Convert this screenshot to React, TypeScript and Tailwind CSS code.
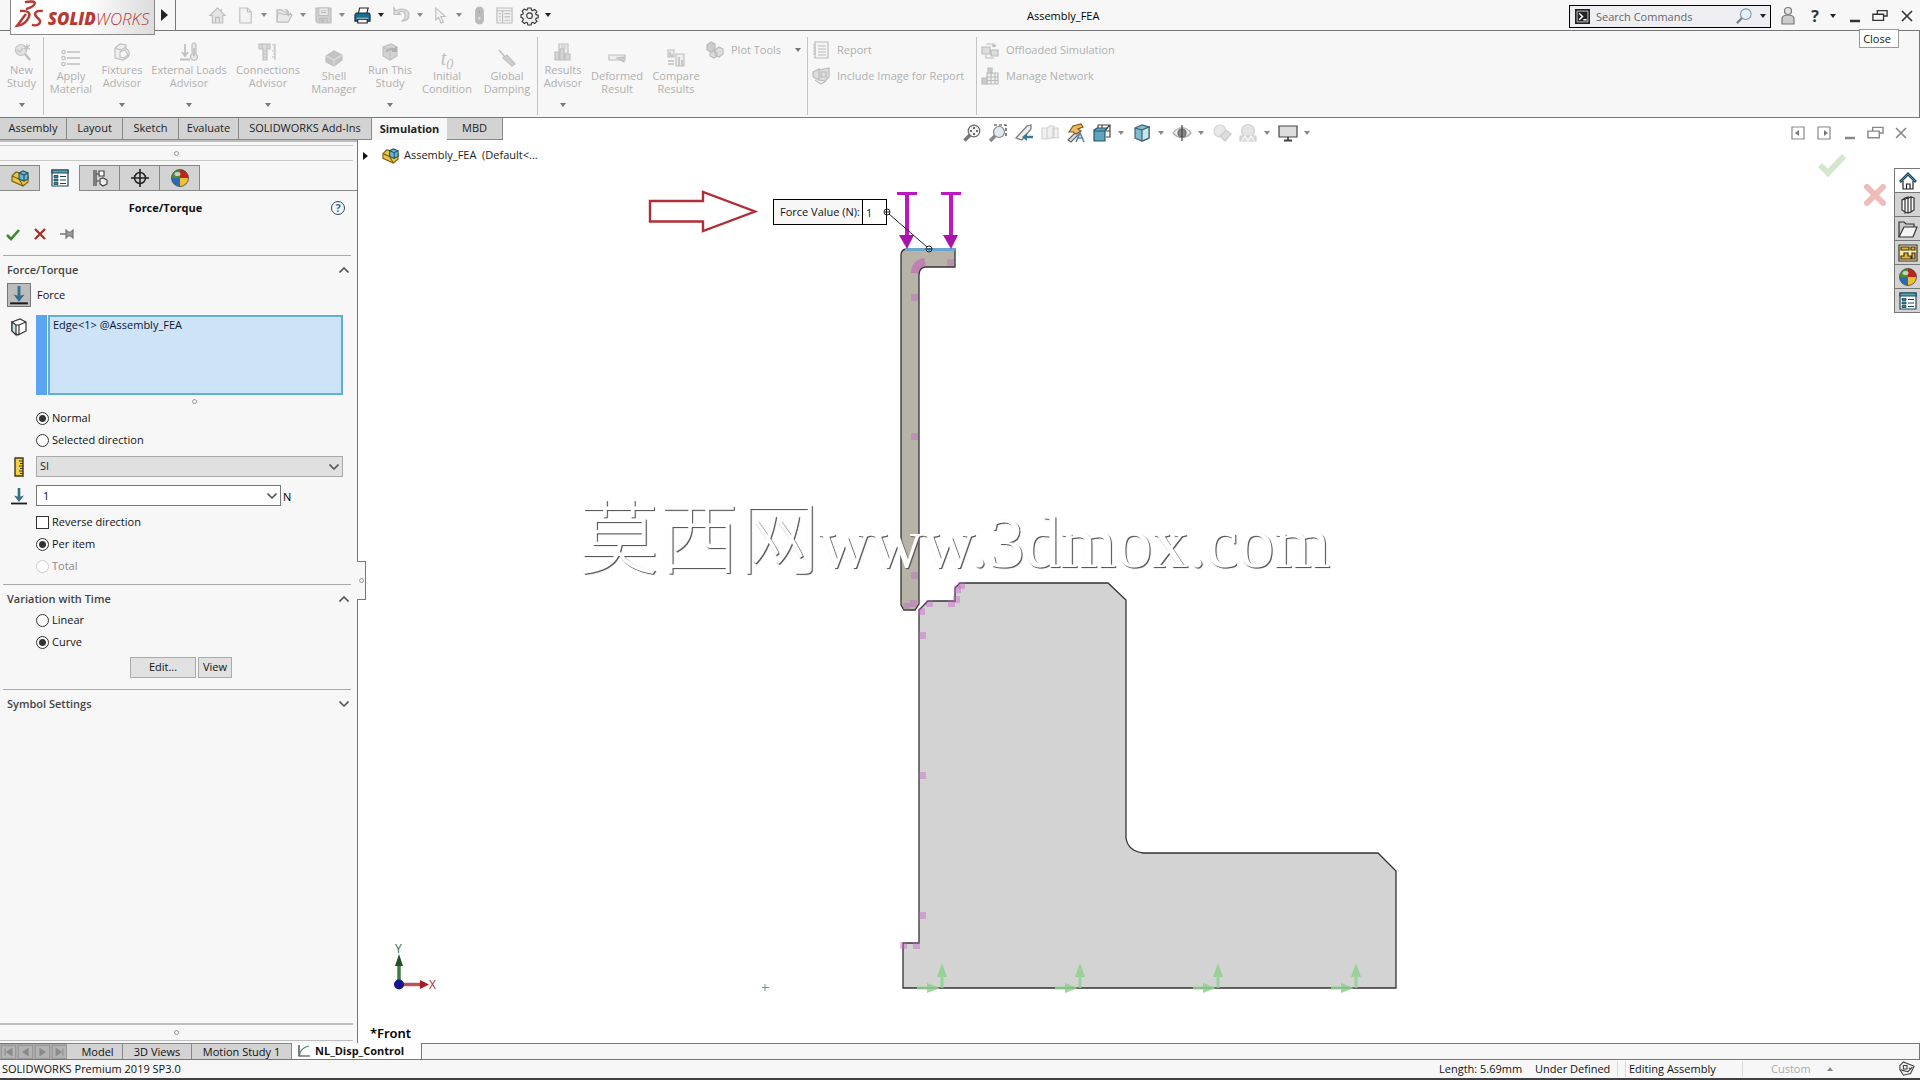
import type { ReactNode } from "react";
import { clsx } from "clsx";

type IconProps = { className?: string; children: ReactNode; box?: string };

function Icon({ className = "size-[18px]", children, box = "0 0 18 18" }: IconProps) {
  return (
    <svg
      viewBox={box}
      className={clsx("shrink-0 overflow-visible", className)}
      fill="none"
      stroke="currentColor"
      strokeWidth="1.2"
      aria-hidden="true"
    >
      {children}
    </svg>
  );
}

function Caret({ className = "text-[#555]" }: { className?: string }) {
  return (
    <svg viewBox="0 0 6 4" className={clsx("h-1 w-1.5 shrink-0", className)} aria-hidden="true">
      <path d="M0 0h6L3 4z" fill="currentColor" />
    </svg>
  );
}

function Chevron({ up }: { up?: boolean }) {
  return (
    <svg viewBox="0 0 10 6" className="h-1.5 w-2.5" fill="none" stroke="#555" strokeWidth="1.6" aria-hidden="true">
      <path d={up ? "M.5 5.5 5 1l4.5 4.5" : "M.5.5 5 5 9.500.5"} />
    </svg>
  );
}

/* ---------- icons ---------- */

const icons = {
  home: (
    <>
      <path d="M1 9 9 1l8 8h-2.500v8h-11V9z" fill="#e4e4e4" />
      <path d="M7 17v-6h4v6" />
      <path d="M13 2v3" />
    </>
  ),
  file: <path d="M3 1h8l4 4v12H3zM11 1v4h4" fill="#f3f3f3" />,
  open: (
    <>
      <path d="M1 15V3h5l2 2h5v3" fill="#e6e6e6" />
      <path d="m1 16 1-10 6 2h9l-4 8z" fill="#e9e9e9" />
      <path d="M9 3c3-1 4 1 4 5m-2-2 2 3 3-3" />
    </>
  ),
  save: (
    <>
      <path d="M1 1h16v16H3l-2-2z" fill="#cfcfcf" />
      <path d="M4 1h10v8H4z" fill="#eee" />
      <path d="M5 17v-5h8v5M6 4h6M6 6h6" />
      <path d="M7 13h2v3H7z" fill="currentColor" />
    </>
  ),
  print: (
    <>
      <path d="M4.500 7 6 1h9l-1.500 6" fill="#fff" stroke="#222" />
      <path d="M1 9c0-1.500 1-2.500 2-2.500h12c1 0 2 1 2 2.500v6H1z" fill="#1d6e94" stroke="#16323f" />
      <path d="M3 12h12" stroke="#bfe3f2" />
      <path d="M4 13h10v4H4z" fill="#f4f4f4" stroke="#222" />
    </>
  ),
  undo: <path d="M1 1v7h7L5.500 6C9 3.500 13 5 13 9c0 3-2 5-4 6 5 0 8-2.500 8-7 0-5-8-8-14-4z" fill="#dedede" />,
  cursor: <path d="M4 1v13l3-3 2.500 6 2.500-1-2.500-6H14z" fill="#f3f3f3" />,
  light: (
    <>
      <rect x="5" y="0" width="8" height="18" rx="4" fill="#b9b9b9" />
      <circle cx="9" cy="5" r="1.500" fill="#999" />
      <circle cx="9" cy="12" r="2" fill="#ddd" />
    </>
  ),
  list: (
    <>
      <path d="M1 1h16v16H1zM1 4h16M7 4v13" fill="#f0f0f0" />
      <path d="M3 7h2M3 10.500h2M3 14h2M9 7h6M9 10.500h6M9 14h6" />
    </>
  ),
  gear: (
    <>
      <path
        d="M7.300 1h3.400l.5 2.200 1.300.6 2-1.300 2.300 2.300-1.300 2 .6 1.300 2.100.5v2.800l-2.100.5-.6 1.300 1.300 2-2.300 2.300-2-1.300-1.300.6-.5 2.200H7.300l-.5-2.200-1.300-.6-2 1.300-2.300-2.300 1.300-2-.6-1.300L0 10.900V8.100l1.900-.5.6-1.300-1.300-2L3.500 2l2 1.300 1.300-.6z"
        fill="#eee"
      />
      <circle cx="9" cy="9.200" r="3" fill="#fff" />
    </>
  ),
  newStudy: (
    <>
      <circle cx="8" cy="7" r="5.500" fill="#e2e2e2" />
      <path d="m12 11 5 6" strokeWidth="2.500" />
      <path d="M14 1v6M11 3l6 3M11 6l6-4M4 7l3 2 3-4" />
    </>
  ),
  material: (
    <>
      <path d="M5 3h13M5 9h13M5 15h13" strokeWidth="1.600" />
      <circle cx="1.500" cy="3" r="1.700" />
      <circle cx="1.500" cy="9" r="1.700" />
      <circle cx="1.500" cy="15" r="1.700" />
    </>
  ),
  fixture: (
    <>
      <path d="M2 5 7 1l6 1v4c4 1 4 5 2 8l-5 3-8-2z" fill="#eee" />
      <path d="m2 5 6 2 5-3M8 7v4" />
      <path d="m7 9 5-2 3 5-4 3-4-1z" fill="#f7f7f7" />
    </>
  ),
  loads: (
    <>
      <path d="M5 1v12M2 9l3 4 3-4M0 16.500h10" strokeWidth="1.800" />
      <path d="M12 2a2 2 0 0 1 4 0v9a3.500 3.500 0 1 1-4 0z" fill="#e5e5e5" />
      <path d="M14 5v8" strokeWidth="1.800" />
    </>
  ),
  connections: (
    <>
      <path d="M0 1h11v5H8v11H4V6H0z" fill="#dcdcdc" />
      <path d="M3 1v5M8 1v5M4 8h4M4 11h4M4 14h4M16 1v16M13 2h3M14 5h2M13 8h3M14 11h2M13 14h3" />
    </>
  ),
  shell: (
    <>
      <path d="m1 7 8-5 8 4v5l-8 6-8-4z" fill="#c4c4c4" />
      <path d="m1 7 8 4 8-5M9 11v6" stroke="#ddd" />
    </>
  ),
  run: (
    <>
      <path d="m2 4 8-3 6 3v9l-7 4-7-4z" fill="#d2d2d2" />
      <path d="m2 4 7 4 7-4M9 8v9" />
      <path d="M5 9c3-4 7-4 10-1m0-4v4h-4" strokeWidth="2" stroke="#b0b0b0" />
    </>
  ),
  damping: (
    <>
      <path d="m1 1 6 7" strokeWidth="1.600" />
      <path d="m5 9 4-3 8 9-3 2z" fill="#cfcfcf" />
    </>
  ),
  results: (
    <>
      <path d="M5 1h9v9H5zM7 3h5M7 5h5" fill="#eee" />
      <path d="M1 9h4v8H1zM6 6h4v11H6zM11 11h5v6h-5z" fill="#d5d5d5" />
    </>
  ),
  deformed: (
    <>
      <path d="M1 6h16v5H1z" fill="#eee" />
      <path d="m9 9 7 4V8z" fill="#ccc" />
    </>
  ),
  compare: (
    <>
      <path d="M1 1h6v7H1zM9 5h8v12H9z" fill="#eee" />
      <path d="M3 3v5M5 5v3M12 8v9M15 11v6M1 12h6M1 15h6" strokeWidth="1.600" />
    </>
  ),
  plot: (
    <>
      <path d="m1 4 4-3 4 2v5l-4 3-4-2z" fill="#ccc" />
      <path d="m9 9 4-3 4 2v5l-4 3-4-2zM4 12l4-2 3 2v3l-3 2-4-2z" fill="#ddd" />
    </>
  ),
  report: (
    <>
      <path d="M3 1h13v16H3z" fill="#f4f4f4" />
      <path d="M6 5h8M6 8h8M6 11h8M6 14h8M1 4h3M1 7h3M1 10h3M1 13h3" />
    </>
  ),
  includeImage: (
    <>
      <path d="m1 5 6-3v11l-6-3zM7 3l10-2v9l-4 4-6-1z" fill="#ddd" />
      <path d="M9 5h5v5H9zM3 13l6 4 5-3" />
    </>
  ),
  offload: (
    <>
      <path d="M1 6h8v7H1zM10 9h7v6h-7z" fill="#ddd" />
      <path d="M5 3h8v3m-2-2 2 2 2-2M13 17H5v-3" />
    </>
  ),
  network: (
    <>
      <path d="M6 6h11v11H6zM6 10h11M6 13.500h11M10 6v11M14 6v11" fill="#eee" />
      <path d="M7 1h4v5H7zM1 11h5v6H1z" fill="#ccc" />
    </>
  ),
  part: (
    <>
      <path d="m1 7 4-4 4 1 8 3v6l-5 4L1 12z" fill="#f0c540" stroke="#7a6216" />
      <path d="m1 7 7 3 4 7" stroke="#7a6216" />
      <path d="m8 4 4-2 5 2v6l-4 2-5-2z" fill="#69b6d0" stroke="#285866" />
      <path d="m8 4 5 2 4-2M13 6v6" stroke="#285866" />
    </>
  ),
  property: (
    <>
      <path d="M1 1h16v16H1z" fill="#fff" stroke="#1f4655" />
      <path d="M1 1h16v3H1z" fill="#5ba4b8" stroke="#1f4655" />
      <path d="M3 6.500h4v2H3zM3 10h4v2H3zM3 13.500h4v2H3z" fill="#2c86a6" stroke="#1f4655" strokeWidth=".8" />
      <path d="M9 7.500h6M9 11h6M9 14.500h6" stroke="#1f4655" />
    </>
  ),
  config: (
    <>
      <path d="M3 1v16M5 1v16M5 5h3M5 12h3" stroke="#444" />
      <path d="M8 2h5v5H8z" fill="#fff" stroke="#444" />
      <path d="m9 10 3-1 4 2v4l-4 2-3-2z" fill="#eee" stroke="#444" />
    </>
  ),
  target: (
    <>
      <circle cx="9" cy="9" r="5.500" stroke="#222" strokeWidth="1.500" />
      <path d="M9 0v18M0 9h18" stroke="#222" strokeWidth="1.600" />
    </>
  ),
  ball: (
    <>
      <g stroke="none">
        <path d="M9 9V.5A8.500 8.500 0 0 0 .5 9z" fill="#4b8f3e" />
        <path d="M9 9V.5A8.500 8.500 0 0 1 17.500 9z" fill="#b8261c" />
        <path d="M9 9H.5A8.500 8.500 0 0 0 9 17.500z" fill="#2b6bb5" />
        <path d="M9 9h8.500A8.500 8.500 0 0 1 9 17.500z" fill="#edc12f" />
        <ellipse cx="6.500" cy="5" rx="3" ry="2" fill="#fff" opacity=".65" />
      </g>
      <circle cx="9" cy="9" r="8.500" stroke="#444" strokeWidth=".8" />
    </>
  ),
  force: (
    <>
      <path d="M9 1v10" stroke="#336f88" strokeWidth="2.600" />
      <path d="M4 8.500 9 10l5-1.500L9 15z" fill="#336f88" stroke="none" />
      <path d="M1 16.500h16" stroke="#1b1b24" strokeWidth="1.800" />
    </>
  ),
  cube: (
    <>
      <path d="m2 4 8-3 6 3v9l-8 4-6-4z" fill="#fff" stroke="#333" />
      <path d="m2 4 4 3v10l-4-4z" fill="#cde3e6" stroke="#333" />
      <path d="m6 7 3 0 7-3M9 7v10" stroke="#333" />
    </>
  ),
  ruler: (
    <>
      <path d="M5 0h8v18H5z" fill="#f5d03f" stroke="#3b3622" strokeWidth="1.400" />
      <path d="M9 3h4M10 5.500h3M9 8h4M10 10.500h3M9 13h4M10 15.500h3" stroke="#3b3622" />
    </>
  ),
  zoomFit: (
    <>
      <path d="m7 11-5.500 5.500" stroke="#777" strokeWidth="3.500" />
      <circle cx="11" cy="7" r="5.800" fill="#f1f1f1" stroke="#666" />
      <path d="M11 3v8M7 7h8" stroke="#444" strokeWidth="1.600" strokeDasharray="2 4 2" />
    </>
  ),
  zoomArea: (
    <>
      <path d="M5 1h12v12" stroke="#333" strokeDasharray="3 2" />
      <path d="m6.500 11.500-5.500 5.500" stroke="#888" strokeWidth="3.500" />
      <circle cx="10" cy="8" r="5.500" fill="#dfeaf0" stroke="#888" />
    </>
  ),
  prevView: (
    <>
      <path d="m1 14 11-12 4-1v4L7 16z" fill="#eee" stroke="#777" />
      <path d="M18 13h-7" stroke="#38798f" strokeWidth="2.500" />
      <path d="m7 13 5-4v8z" fill="#38798f" stroke="none" />
    </>
  ),
  section: <path d="M1 4h5v11H1zM6 4l3-2h4v11l-7 2zM12 4h5v10h-5z" fill="#f0f0f0" stroke="#d2d2d2" />,
  annotate: (
    <>
      <path d="m1 16 9-9 3 2-9 9z" fill="#ddd" stroke="#666" />
      <path d="m2 8 4-6 8-2 2 3-5 2 3 2-5 3-3-2z" fill="#eeb95f" stroke="#7d5a24" />
      <path d="m9 18 4-9 4 9M10 14h6" stroke="#5a86a8" strokeWidth="1.600" />
    </>
  ),
  orient: (
    <>
      <path d="M5 1h12v12h-4M9 1v5M17 7h-4M5 1v4M13 5l4-4" stroke="#444" />
      <path d="m1 6 3-2h10l-2 3v10H1z" fill="#5ea4c0" stroke="#2a566a" />
      <path d="M1 7h11l2-3" stroke="#2a566a" />
    </>
  ),
  display: (
    <>
      <path d="m2 4 7-3 7 2v11l-7 3-7-3z" fill="#82bad0" stroke="#3c6474" />
      <path d="M9 6v11l7-3V3z" fill="#c8e4ee" stroke="#3c6474" />
      <path d="m2 4 7 2" stroke="#3c6474" />
    </>
  ),
  eye: (
    <>
      <path d="M0 9c5-7 13-7 18 0-5 6-13 6-18 0z" fill="#eee" stroke="#aaa" />
      <circle cx="9" cy="9" r="4" fill="#888" stroke="#666" />
      <path d="M9 1v16" stroke="#444" />
    </>
  ),
  appearance: (
    <>
      <circle cx="7" cy="7" r="6" fill="#e9e9e9" stroke="#d5d5d5" />
      <path d="m7 12 6-6 5 4-6 7z" fill="#dcdcdc" stroke="#ccc" />
    </>
  ),
  scene: (
    <>
      <circle cx="9" cy="7" r="6.500" fill="#e4e4e4" stroke="#d2d2d2" />
      <path d="M1 12h16v5H1z" fill="#ddd" stroke="#ccc" />
      <path d="M3 17l3-5 3 5 3-5 3 5" stroke="#f8f8f8" />
    </>
  ),
  monitor: (
    <>
      <path d="M0 2h18v11H0z" fill="#ddd" stroke="#444" />
      <path d="M9 13v3M5 16.500h8" stroke="#444" strokeWidth="1.800" />
    </>
  ),
  restore: <path d="M6 7V3h11v6h-4M1 7h12v7H1z" strokeWidth="1.500" />,
  close: <path d="m4 4 10 10M14 4 4 14" strokeWidth="1.600" />,
  minimize: <path d="M4 14h10" strokeWidth="2.500" />,
  taskHome: (
    <>
      <path d="M4 9v8h10V9" fill="#fff" stroke="#222" />
      <path d="M7.500 17v-5h3.500v5" stroke="#222" />
      <path d="M1 10 9 2l8 8" stroke="#1d4a5d" strokeWidth="2.800" />
      <path d="M1.500 9.500 9 2l7.500 7.500" stroke="#4e8ba5" strokeWidth="1" />
    </>
  ),
  library: (
    <>
      <path d="m3 4 3-2v14l-3-2zM6 2l3-1v15l-3 1zM9 2l3-1v15l-3 1zM12 1l3 1v12l-3 2z" fill="#f6f6f6" stroke="#333" />
      <path d="m3 4 9-3" stroke="#333" />
    </>
  ),
  folder: (
    <>
      <path d="M0 17V2h5l2 2h8v4" fill="#c9c9c9" stroke="#333" />
      <path d="m0 17 5-10h13l-4 10z" fill="#f4f4f4" stroke="#333" />
    </>
  ),
  palette: (
    <>
      <path d="M0 1h18v16H0z" fill="#ffe89a" stroke="#333" />
      <path d="M2 3h8v3H2zM12 3h4v3h-4zM5 9h4v3h3v3H2v-3h3zM13 9h3v6h-3z" fill="#e9b429" stroke="#333" />
    </>
  ),
} satisfies Record<string, ReactNode>;

type IconName = keyof typeof icons;

/* ---------- title bar ---------- */

const quickAccess: { name: IconName; label: string; caret?: boolean; live?: boolean; slot: string }[] = [
  { name: "home", label: "Home", slot: "w-7" },
  { name: "file", label: "New", caret: true, slot: "w-[39px]" },
  { name: "open", label: "Open", caret: true, slot: "w-[39px]" },
  { name: "save", label: "Save", caret: true, slot: "w-[39px]" },
  { name: "print", label: "Print", caret: true, live: true, slot: "w-[39px]" },
  { name: "undo", label: "Undo", caret: true, slot: "w-[39px]" },
  { name: "cursor", label: "Select", caret: true, slot: "w-[39px]" },
  { name: "light", label: "Rebuild", slot: "w-[25px]" },
  { name: "list", label: "File Properties", slot: "w-[25px]" },
  { name: "gear", label: "Options", caret: true, live: true, slot: "w-[39px]" },
];

function TitleBar() {
  return (
    <header className="relative z-20 flex h-[31px] shrink-0 items-center border-b border-[#777] bg-[#f7f7f7]">
      <div className="ml-2.5 h-[35px] w-[145px] shrink-0 self-start border border-t-0 border-[#888] bg-linear-to-r from-white via-white to-[#dcdcdc]">
        <svg viewBox="0 0 144 34" className="h-[34px] w-full" aria-label="SOLIDWORKS">
          <g fill="none" stroke="#b8392f" strokeWidth="2.400">
            <path d="M14 2c5-1 10-1 10 1 0 3-5 5-9 6" />
            <path d="M9 11c8-1 11 2 9 6-2 5-6 8-12 9l9-12" />
            <path d="M32 11c-7-1-9 2-7 5s6 4 4 7c-1 2-5 3-8 2" />
          </g>
          <text x="37" y="25" fill="#b8392f" className="font-['Open_Sans',sans-serif] text-[17px] italic">
            <tspan className="font-extrabold">SOLID</tspan>
            <tspan className="font-light">WORKS</tspan>
          </text>
        </svg>
      </div>
      <button aria-label="Show menu" className="flex h-[30px] w-[21px] shrink-0 items-center border-r border-[#777] pl-1.5">
        <svg viewBox="0 0 7 12" className="h-3 w-[7px]" aria-hidden="true">
          <path d="M0 0v12l7-6z" fill="#222" />
        </svg>
      </button>
      <nav className="ml-[33px] flex items-center">
        {quickAccess.map((q) => (
          <button
            key={q.name}
            aria-label={q.label}
            className={clsx("flex items-center gap-[7px]", q.slot, q.live ? "text-[#333]" : "text-[#bdbdbd]")}
          >
            <Icon className="size-[17px]">{icons[q.name]}</Icon>
            {q.caret && <Caret className={q.live ? "text-[#222]" : "text-[#888]"} />}
          </button>
        ))}
      </nav>
      <h1 className="absolute left-1/2 mt-0.5 ml-[67px] text-[11px] text-black">Assembly_FEA</h1>
      <div className="mt-0.5 ml-auto flex items-center">
        <div className="flex h-[23px] w-[202px] items-center border border-black bg-[#efeff3] pl-[5px]">
          <Icon className="size-[15px]">
            <path d="M0 0h18v18H0z" fill="#222" stroke="none" />
            <path d="M2.500 2.500h13v13h-13z" stroke="#ddd" strokeWidth="1" />
            <path d="m5 5 4 4-4 4M10 13h4" stroke="#fff" strokeWidth="1.800" />
          </Icon>
          <input
            aria-label="Search Commands"
            placeholder="Search Commands"
            className="ml-1.5 h-5 w-[140px] bg-transparent text-[11px] text-black outline-none placeholder:text-[#666]"
          />
          <Icon className="size-4">
            <path d="m7 11-6 6" stroke="#7f7f88" strokeWidth="2.500" />
            <circle cx="11" cy="7" r="6" fill="#e5f0fb" stroke="#7f93ab" />
          </Icon>
          <Caret className="ml-2 text-[#222]" />
        </div>
        <button aria-label="Sign in" className="ml-2 text-[#777]">
          <Icon>
            <path d="M3 17v-5c0-3 3-4 6-4s6 1 6 4v5z" fill="#cdcdcd" />
            <circle cx="9" cy="4" r="3.500" fill="#e3e3e3" />
          </Icon>
        </button>
        <button aria-label="Help" className="ml-2.5 w-4 text-[16px] leading-5 font-bold text-[#333]">
          ?
        </button>
        <Caret className="ml-[7px] text-[#222]" />
        <button aria-label="Minimize" className="ml-2.5 text-[#333]">
          <Icon>{icons.minimize}</Icon>
        </button>
        <button aria-label="Restore" className="ml-2 text-[#333]">
          <Icon className="size-4">{icons.restore}</Icon>
        </button>
        <button aria-label="Close" className="mr-1 ml-2.5 text-[#333]">
          <Icon>{icons.close}</Icon>
        </button>
      </div>
      <div role="tooltip" className="absolute top-[29px] right-[21px] h-[19px] w-[40px] border border-[#999] bg-white pr-1 text-center text-[11px] leading-[17px] text-[#222]">
        Close
      </div>
    </header>
  );
}

/* ---------- ribbon ---------- */

type Tool = { icon?: IconName; lines: [string, string]; w: string; caret?: boolean };

const studyTools: Tool[] = [
  { icon: "material", lines: ["Apply", "Material"], w: "w-[54px]" },
  { icon: "fixture", lines: ["Fixtures", "Advisor"], w: "w-12", caret: true },
  { icon: "loads", lines: ["External Loads", "Advisor"], w: "w-[86px]", caret: true },
  { icon: "connections", lines: ["Connections", "Advisor"], w: "w-[72px]", caret: true },
  { icon: "shell", lines: ["Shell", "Manager"], w: "w-[60px]" },
  { icon: "run", lines: ["Run This", "Study"], w: "w-[52px]", caret: true },
  { lines: ["Initial", "Condition"], w: "w-[62px]" },
  { icon: "damping", lines: ["Global", "Damping"], w: "w-[58px]" },
];

const resultTools: Tool[] = [
  { icon: "results", lines: ["Results", "Advisor"], w: "w-[50px]", caret: true },
  { icon: "deformed", lines: ["Deformed", "Result"], w: "w-[58px]" },
  { icon: "compare", lines: ["Compare", "Results"], w: "w-[60px]" },
];

function RibbonTool({ tool }: { tool: Tool }) {
  return (
    <button
      className={clsx(
        "flex h-[72px] shrink-0 flex-col items-center whitespace-nowrap text-[#c0c0c0]",
        tool.w,
        tool.caret ? "pt-1.5" : "pt-3",
      )}
    >
      {tool.icon ? (
        <Icon>{icons[tool.icon]}</Icon>
      ) : (
        <span className="h-[18px] font-['Liberation_Serif',serif] text-[20px] leading-[18px] italic">
          t<sub className="text-[14px]">0</sub>
        </span>
      )}
      <span className="mt-0.5 text-[11px] leading-[13px] text-[#b0b0b0]">
        {tool.lines[0]}
        <br />
        {tool.lines[1]}
      </span>
      {tool.caret && <Caret className="mt-3.5 text-[#777]" />}
    </button>
  );
}

function RibbonRow({ icon, text, caret }: { icon: IconName; text: string; caret?: boolean }) {
  return (
    <button className="flex h-[26px] items-center text-[11px] whitespace-nowrap text-[#bbb]">
      <Icon>{icons[icon]}</Icon>
      <span className="ml-[7px] text-[#b0b0b0]">{text}</span>
      {caret && <Caret className="ml-3.5 text-[#777]" />}
    </button>
  );
}

function Ribbon() {
  return (
    <div className="flex h-[87px] shrink-0 items-start border-r border-b border-[#777] bg-[#f7f7f7] pt-1.5">
      <div className="flex h-[78px] border-r border-[#c4c4c4]">
        <RibbonTool tool={{ icon: "newStudy", lines: ["New", "Study"], w: "w-[43px]", caret: true }} />
      </div>
      <div className="flex h-[78px] w-[494px] border-r border-[#c4c4c4]">
        {studyTools.map((t) => (
          <RibbonTool key={t.lines.join()} tool={t} />
        ))}
      </div>
      <div className="flex h-[78px] w-[270px] border-r border-[#c4c4c4]">
        {resultTools.map((t) => (
          <RibbonTool key={t.lines.join()} tool={t} />
        ))}
        <RibbonRow icon="plot" text="Plot Tools" caret />
      </div>
      <div className="h-[78px] w-[169px] border-r border-[#c4c4c4] pl-1">
        <RibbonRow icon="report" text="Report" />
        <RibbonRow icon="includeImage" text="Include Image for Report" />
      </div>
      <div className="pl-1">
        <RibbonRow icon="offload" text="Offloaded Simulation" />
        <RibbonRow icon="network" text="Manage Network" />
      </div>
    </div>
  );
}

const commandTabs = [
  { label: "Assembly", w: "w-[67px]" },
  { label: "Layout", w: "w-14" },
  { label: "Sketch", w: "w-14" },
  { label: "Evaluate", w: "w-[60px]" },
  { label: "SOLIDWORKS Add-Ins", w: "w-[133px]" },
  { label: "Simulation", w: "w-[75px]" },
  { label: "MBD", w: "w-14" },
];

function CommandTabs() {
  return (
    <nav className="flex h-[22px] shrink-0 bg-white">
      {commandTabs.map((t) => (
        <button
          key={t.label}
          className={clsx(
            "shrink-0 text-[11px] whitespace-nowrap text-[#222]",
            t.w,
            t.label === "Simulation" ? "bg-[#f7f7f7] font-bold" : "border-r border-b border-[#888] bg-[#d3d3d3]",
          )}
        >
          {t.label}
        </button>
      ))}
    </nav>
  );
}

/* ---------- property manager ---------- */

const panelTabs: { name: IconName; label: string }[] = [
  { name: "part", label: "Design Tree" },
  { name: "property", label: "Property Manager" },
  { name: "config", label: "Configurations" },
  { name: "target", label: "DimXpert" },
  { name: "ball", label: "Display" },
];

function Grip() {
  return <span className="size-[5px] rounded-full border border-[#999]" />;
}

function Choice(props: { label: string; name?: string; checked?: boolean; disabled?: boolean; box?: boolean }) {
  const { label, name, checked, disabled, box } = props;
  return (
    <label className={clsx("ml-9 flex h-[22px] items-center gap-[3px] text-[11px]", disabled ? "text-[#888]" : "text-[#111]")}>
      <input
        type={box ? "checkbox" : "radio"}
        name={name}
        defaultChecked={checked}
        disabled={disabled}
        className={clsx(
          "size-[13px] appearance-none border bg-white",
          disabled ? "border-[#ccc]" : "border-[#333]",
          !box && "rounded-full checked:bg-[radial-gradient(circle,#333_3px,#fff_4px)]",
        )}
      />
      {label}
    </label>
  );
}

function SectionHead({ title, open }: { title: string; open?: boolean }) {
  return (
    <>
      <hr className="mr-1.5 ml-[3px] border-[#a8a8a8]" />
      <h3 className="h-6 pt-1">
        <button className="flex h-5 w-full items-center justify-between pr-2 pl-[7px] text-[11px] font-semibold text-[#444]">
          {title}
          <Chevron up={open} />
        </button>
      </h3>
    </>
  );
}

function PropertyPanel() {
  return (
    <aside className="relative flex w-[358px] shrink-0 flex-col border-r border-[#777] bg-[#f7f7f7]">
      <div className="h-0.5 bg-[#bdbdbd]" />
      <div className="mt-[3px] mr-1 flex h-4 items-center justify-center border-y border-[#c8c8c8]">
        <Grip />
      </div>
      <div className="mt-1 flex h-[26px] border-b border-[#888]">
        {panelTabs.map((t) => (
          <button
            key={t.name}
            aria-label={t.label}
            className={clsx(
              "flex w-10 items-center justify-center border-r border-[#888]",
              t.name === "property" ? "-mb-px bg-[#f7f7f7]" : "border-t bg-[#d3d3d3]",
            )}
          >
            <Icon>{icons[t.name]}</Icon>
          </button>
        ))}
      </div>

      <div className="flex h-[34px] items-center">
        <h2 className="flex-1 text-center text-[11px] font-bold text-[#111]">Force/Torque</h2>
        <button aria-label="Help" className="mr-3 flex size-[14px] items-center justify-center rounded-full border border-[#2b4a63] text-[11px] leading-3 font-bold text-[#2f6da0]">
          ?
        </button>
      </div>
      <div className="flex h-[30px] items-start gap-3.5 pl-1.5">
        <button aria-label="OK">
          <Icon className="h-[18px] w-3.5" box="0 0 14 18">
            <path d="m1 10 4 4 8-9" stroke="#3b8a2f" strokeWidth="2.600" />
          </Icon>
        </button>
        <button aria-label="Cancel">
          <Icon className="h-[18px] w-3" box="0 0 12 18">
            <path d="m1 4 10 10M11 4 1 14" stroke="#a33228" strokeWidth="2.400" />
          </Icon>
        </button>
        <button aria-label="Keep visible" className="text-[#777]">
          <Icon className="h-[18px] w-3.5" box="0 0 14 18">
            <path d="M0 9h6" strokeWidth="1.500" />
            <path d="M6 5v8l2-2h3l2 2V5l-2 2H8z" fill="#999" />
          </Icon>
        </button>
      </div>

      <SectionHead title="Force/Torque" open />
      <div className="mt-[3px] flex h-6 items-center pl-[7px] text-[11px] text-[#111]">
        <button aria-label="Force" className="flex size-6 items-center justify-center border border-[#777] bg-[#bcbcbc]">
          <Icon className="size-5">{icons.force}</Icon>
        </button>
        <span className="ml-1.5">Force</span>
      </div>
      <div className="mt-2 mr-3.5 flex h-20">
        <div className="flex w-9 justify-center pt-[3px] pl-0.5">
          <Icon>{icons.cube}</Icon>
        </div>
        <div className="w-[11px] bg-[#5aa5f3]" />
        <ul className="ml-px flex-1 border-2 border-[#62b0cd] bg-[#cde3f8] pl-[3px] text-[11px] leading-4 text-[#0a1633]">
          <li>Edge&lt;1&gt; @Assembly_FEA</li>
        </ul>
      </div>
      <div className="flex h-3 items-center justify-center pl-8">
        <Grip />
      </div>
      <Choice label="Normal" name="direction" checked />
      <Choice label="Selected direction" name="direction" />
      <div className="mt-[5px] mr-3.5 flex h-[21px]">
        <div className="flex w-9 items-center justify-center pl-0.5">
          <Icon>{icons.ruler}</Icon>
        </div>
        <div className="relative flex-1">
          <select aria-label="Unit" className="block h-full w-full appearance-none border border-[#aaa] bg-[#e0e0e0] pl-[3px] text-[11px] text-[#222]">
            <option>SI</option>
          </select>
          <span className="pointer-events-none absolute inset-y-0 right-1 flex items-center">
            <Chevron />
          </span>
        </div>
      </div>
      <div className="mt-2 flex h-[21px]">
        <div className="flex w-9 items-center justify-center pl-0.5">
          <Icon>{icons.force}</Icon>
        </div>
        <div className="relative w-[245px]">
          <input aria-label="Force value" defaultValue="1" className="block h-full w-full border border-[#777] bg-white pl-1.5 text-[11px] text-[#111]" />
          <span className="pointer-events-none absolute inset-y-0 right-1 flex items-center">
            <Chevron />
          </span>
        </div>
        <span className="ml-0.5 pt-1 text-[11px]">N</span>
      </div>
      <div className="mt-[5px]">
        <Choice label="Reverse direction" box />
        <Choice label="Per item" name="distribution" checked />
        <Choice label="Total" name="distribution" disabled />
      </div>

      <div className="mt-[7px]">
        <SectionHead title="Variation with Time" open />
        <Choice label="Linear" name="variation" />
        <Choice label="Curve" name="variation" checked />
        <div className="mt-1 ml-[130px] flex h-[21px] gap-0.5 text-[11px] text-[#111]">
          <button className="w-[66px] border border-[#aaa] bg-[#e1e1e1]">Edit...</button>
          <button className="w-[34px] border border-[#aaa] bg-[#e1e1e1]">View</button>
        </div>
      </div>
      <div className="mt-[11px]">
        <SectionHead title="Symbol Settings" />
      </div>

      <div className="mt-auto mr-1 mb-0.5 flex h-[18px] items-center justify-center border-t-2 border-b border-[#bdbdbd]">
        <Grip />
      </div>
      <button
        aria-label="Collapse panel"
        className="absolute top-[421px] -right-[9px] z-10 flex h-[39px] w-[9px] items-center justify-center border border-l-0 border-[#777] bg-[#f7f7f7]"
      >
        <Grip />
      </button>
    </aside>
  );
}

/* ---------- graphics area ---------- */

const hud: { name: IconName; label: string; caret?: boolean }[] = [
  { name: "zoomFit", label: "Zoom to Fit" },
  { name: "zoomArea", label: "Zoom to Area" },
  { name: "prevView", label: "Previous View" },
  { name: "section", label: "Section View" },
  { name: "annotate", label: "Dynamic Annotation Views" },
  { name: "orient", label: "View Orientation", caret: true },
  { name: "display", label: "Display Style", caret: true },
  { name: "eye", label: "Hide/Show Items", caret: true },
  { name: "appearance", label: "Edit Appearance" },
  { name: "scene", label: "Apply Scene", caret: true },
  { name: "monitor", label: "View Settings", caret: true },
];

const taskTabs: { name: IconName; label: string }[] = [
  { name: "taskHome", label: "Resources" },
  { name: "library", label: "Design Library" },
  { name: "folder", label: "File Explorer" },
  { name: "palette", label: "View Palette" },
  { name: "ball", label: "Appearances" },
  { name: "property", label: "Custom Properties" },
];

const contacts = [
  [951, 263], [915, 298], [915, 437], [915, 576], [914, 604], [907, 607],
  [922, 612], [930, 604], [952, 604], [957, 600], [958, 590], [962, 586],
  [923, 636], [923, 776], [923, 916], [904, 946], [917, 946],
];

const fixtures = [942, 1080, 1218, 1356];

// Model coordinates are page pixels, origin at the panel's right edge
function Model() {
  return (
    <svg
      viewBox="358 140 1562 903"
      preserveAspectRatio="xMinYMin slice"
      className="pointer-events-none absolute inset-0 h-full w-full"
      aria-label="Assembly model"
    >
      <g stroke="#333" strokeWidth="1.300">
        <path
          d="M919 610 928 601H955V588L960 583H1108L1126 600V838Q1128 851 1143 853H1378L1396 871V988H903V943H919z"
          fill="#d3d3d3"
        />
        <path d="M901 255Q901 250 906 249H955V267H925Q919 268 919 275V604L915 610H904L901 605z" fill="#b8b3a7" />
      </g>
      <path d="M905 249.500H955" stroke="#6ba6cf" strokeWidth="3" />
      <path d="M915 273q0-9 10-11" stroke="#c14fc1" strokeOpacity=".5" strokeWidth="8" fill="none" />
      <g fill="#c65fc6" fillOpacity=".4">
        {contacts.map(([x, y]) => (
          <rect key={`${x}-${y}`} x={x - 4} y={y - 4} width="7" height="7" />
        ))}
      </g>
      {fixtures.map((x) => (
        <g key={x} stroke="#8fd28f" fill="#8fd28f" opacity=".85">
          <path d={`M${x} 988v-12`} strokeWidth="3" />
          <path d={`M${x - 5} 977 ${x} 963l5 14z`} stroke="none" />
          <path d={`M${x - 25} 988h14`} strokeWidth="3" />
          <path d={`M${x - 15} 983l13 5-13 5z`} stroke="none" />
        </g>
      ))}
      {[907, 951].map((x) => (
        <g key={x} stroke="#bd18bd" fill="#a814a8">
          <path d={`M${x - 10} 193.500h20`} strokeWidth="3" />
          <path d={`M${x} 193v43`} strokeWidth="4" />
          <path d={`M${x - 8} 235h15l-7 14z`} stroke="none" />
        </g>
      ))}
      <path d="M650 201h53v-9l52 19.500L703 231v-9.500h-53z" fill="none" stroke="#b02e38" strokeWidth="2.400" />
      <g stroke="#222" fill="none">
        <path d="m889 214 38 33" />
        <circle cx="887" cy="212" r="3" />
        <path d="M885 212h5" />
        <circle cx="929" cy="249" r="3" />
        <path d="M927 249h5" />
      </g>
      <path d="M765 984v7M762 987.500h7" stroke="#5aa877" />
      {/* axis triad */}
      <path d="M399 984v-22" stroke="#3f7d3f" strokeWidth="3.500" />
      <path d="m395 966 4-12 4 12z" fill="#24502b" />
      <path d="M399 984.500h22" stroke="#b55" strokeWidth="3.500" />
      <path d="m420 980 9 4.500-9 4.500z" fill="#a31c22" />
      <circle cx="399" cy="984.500" r="5" fill="#17178c" />
      <g className="font-['Open_Sans',sans-serif] text-[12px]">
        <text x="395" y="953" fill="#2d6b3a">Y</text>
        <text x="429" y="989" fill="#b5282f">X</text>
      </g>
    </svg>
  );
}

function Viewport() {
  return (
    <main className="relative min-w-0 flex-1 bg-white">
      <label className="absolute top-[59px] left-[415px] flex h-[26px] w-[114px] items-center border border-black bg-[#f7f7f7] pl-1.5 text-[11px] whitespace-nowrap text-[#111]">
        <span className="flex-1">Force Value (N):</span>
        <input defaultValue="1" className="h-full w-6 border-l border-black bg-white pl-[3px]" />
      </label>
      <Model />
      <div className="absolute inset-x-0 -top-4 z-10 flex justify-center pl-1">
        {hud.map((h) => (
          <button key={h.name} aria-label={h.label} className={clsx("flex items-center gap-[7px]", h.caret ? "w-[40px]" : "w-[26px]")}>
            <Icon>{icons[h.name]}</Icon>
            {h.caret && <Caret className="text-[#888]" />}
          </button>
        ))}
      </div>
      <div className="absolute -top-4 right-2.5 z-10 flex gap-2 text-[#888]">
        <button aria-label="Previous pane">
          <Icon>
            <path d="M3 3h12v12H3z" />
            <path d="M10 6v6L6 9z" fill="#777" stroke="none" />
          </Icon>
        </button>
        <button aria-label="Next pane">
          <Icon>
            <path d="M3 3h12v12H3z" />
            <path d="M9 6v6l4-3z" fill="#777" stroke="none" />
          </Icon>
        </button>
        <button aria-label="Minimize document">
          <Icon>{icons.minimize}</Icon>
        </button>
        <button aria-label="Restore document">
          <Icon className="h-[18px] w-[17px]">{icons.restore}</Icon>
        </button>
        <button aria-label="Close document">
          <Icon>{icons.close}</Icon>
        </button>
      </div>

      <div className="absolute top-[7px] left-[5px] flex items-center text-[11px] text-[#222]">
        <svg viewBox="0 0 5 8" className="h-2 w-[5px]" aria-hidden="true">
          <path d="M0 0v8l5-4z" fill="#111" />
        </svg>
        <Icon className="ml-3.5 size-[17px]">{icons.part}</Icon>
        <span className="ml-[5px] whitespace-pre">Assembly_FEA  (Default&lt;...</span>
      </div>

      <div className="pointer-events-none absolute top-[344px] left-[221px] flex items-start text-white [text-shadow:1px_1px_1px_#555,1px_1px_0_#888]">
        <span className="font-['Noto_Sans_CJK_SC',sans-serif] text-[80px] leading-[96px] font-light">莫西网</span>
        <span className="pt-[11px] font-['Liberation_Serif',serif] text-[72px] leading-[96px]">www.3dmox.com</span>
      </div>

      <button aria-label="Accept" className="absolute top-[13px] right-[73px]">
        <Icon className="h-6 w-[30px]" box="0 0 30 24">
          <path d="m3 12 8 8L27 3" stroke="#d5e6d0" strokeWidth="6" />
        </Icon>
      </button>
      <button aria-label="Reject" className="absolute top-[43px] right-[33px]">
        <Icon className="size-6" box="0 0 24 24">
          <path d="m4 4 16 16M20 4 4 20" stroke="#efbdb9" strokeWidth="6" strokeLinecap="round" />
        </Icon>
      </button>

      <nav className="absolute top-7 right-0 w-[26px] border-t border-l border-[#777]">
        {taskTabs.map((t) => (
          <button
            key={t.name}
            aria-label={t.label}
            className={clsx("flex h-6 w-full items-center justify-center border-b border-[#777]", t.name === "taskHome" ? "bg-white" : "bg-[#d3d3d3]")}
          >
            <Icon>{icons[t.name]}</Icon>
          </button>
        ))}
      </nav>

      <p className="absolute bottom-px left-3 font-['Noto_Sans',sans-serif] text-[13px] leading-[18px] font-semibold text-black">*Front</p>
    </main>
  );
}

/* ---------- bottom bars ---------- */

const studyTabs = [
  { label: "Model", w: "w-14 pl-1.5" },
  { label: "3D Views", w: "w-[69px]" },
  { label: "Motion Study 1", w: "w-[100px]" },
];

function BottomBars() {
  return (
    <footer className="shrink-0 bg-[#f7f7f7] text-[11px] text-[#111]">
      <div className="flex h-[17px] border-b border-[#777]">
        <div className="flex w-[67px] items-center justify-center gap-0.5 border-t border-[#777] bg-[#a9a9a9]">
          {["M3 3v8M11 3 5 7l6 4z", "M10 3 4 7l6 4z", "m4 3 6 4-6 4z", "m3 3 6 4-6 4zM11 3v8"].map((d, i) => (
            <button key={d} aria-label={`Scroll tabs ${i + 1}`} className="border border-[#999] bg-[#b3b3b3] text-[#8a8a8a]">
              <Icon className="h-3 w-[13px]" box="0 0 14 14">
                <path d={d} fill="#8a8a8a" />
              </Icon>
            </button>
          ))}
        </div>
        {studyTabs.map((t) => (
          <button key={t.label} className={clsx("border-t border-r border-[#888] bg-[#d3d3d3] leading-[13px]", t.w)}>
            {t.label}
          </button>
        ))}
        <button className="flex w-[130px] items-center gap-[5px] border-r border-[#777] bg-white pl-1.5 leading-[14px] font-bold">
          <Icon className="size-3" box="0 0 12 12">
            <path d="M1 0v11h11" stroke="#333" />
            <path d="M1 11C2 5 6 2 11 1" stroke="#3d8b70" />
          </Icon>
          NL_Disp_Control
        </button>
        <div className="flex-1 border-t border-r border-[#777]" />
      </div>
      <div className="flex h-[18px] items-center pl-0.5">
        <span>SOLIDWORKS Premium 2019 SP3.0</span>
        <div className="ml-auto flex items-center">
          <span className="w-24">Length: 5.69mm</span>
          <span className="w-[83px] border-r border-[#ddd]">Under Defined</span>
          <span className="ml-[7px] w-[101px] border-l border-[#ddd] pl-[3px]">Editing Assembly</span>
          <span className="ml-4 w-14 border-l border-[#ddd] pl-7 text-[#aaa]">Custom</span>
          <Caret className="ml-[29px] rotate-180 text-[#888]" />
          <Icon className="mr-1 ml-[65px] h-4 w-[18px]">
            <path d="m1 5 4-4 12 5-4 8-8 2-4-6z" fill="#eee" stroke="#444" />
            <path d="M5 5h4v4H5zM11 8l3 1M2 10l8 2 5-5" stroke="#444" />
          </Icon>
        </div>
      </div>
      <div className="h-0.5 bg-[#404044]" />
    </footer>
  );
}

export default function App() {
  return (
    <div className="flex h-screen min-h-[900px] flex-col overflow-hidden bg-white font-['Open_Sans',sans-serif]">
      <TitleBar />
      <Ribbon />
      <CommandTabs />
      <div className="flex min-h-0 flex-1">
        <PropertyPanel />
        <Viewport />
      </div>
      <BottomBars />
    </div>
  );
}
